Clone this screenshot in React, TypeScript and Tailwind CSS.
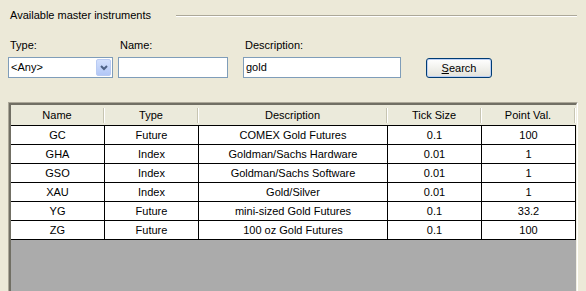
import React from 'react';

const rows = [
  { name: 'GC', type: 'Future', desc: 'COMEX Gold Futures', tick: '0.1', point: '100' },
  { name: 'GHA', type: 'Index', desc: 'Goldman/Sachs Hardware', tick: '0.01', point: '1' },
  { name: 'GSO', type: 'Index', desc: 'Goldman/Sachs Software', tick: '0.01', point: '1' },
  { name: 'XAU', type: 'Index', desc: 'Gold/Silver', tick: '0.01', point: '1' },
  { name: 'YG', type: 'Future', desc: 'mini-sized Gold Futures', tick: '0.1', point: '33.2' },
  { name: 'ZG', type: 'Future', desc: '100 oz Gold Futures', tick: '0.1', point: '100' },
];

// column widths include the 1px right grid line
const cols = [
  { title: 'Name', w: 'w-[94px]' },
  { title: 'Type', w: 'w-[94px]' },
  { title: 'Description', w: 'w-[189px]' },
  { title: 'Tick Size', w: 'w-[94px]' },
  { title: 'Point Val.', w: 'w-[94px]' },
];

const App: React.FC = () => {
  return (
    <div
      className="w-[586px] h-[291px] overflow-hidden bg-[#ECE9D8] text-[11px] text-black flex flex-col"
      style={{ fontFamily: '"Liberation Sans", Arial, sans-serif' }}
    >
      {/* Group title with etched line */}
      <div className="flex items-start pt-[8px] pl-[10px] pr-[9px] h-[22px]">
        <span className="w-[166px] leading-[14px] shrink-0">Available master instruments</span>
        <div className="flex-1 mt-[7px] border-t border-t-[#ACA899] border-b border-b-white" />
      </div>

      {/* Search fields */}
      <div className="flex items-end pl-[8px] mt-[16px]">
        <div className="flex flex-col w-[105px]">
          <span className="pl-[2px] leading-[14px]">Type:</span>
          <div className="mt-[5px] h-[21px] border border-[#7F9DB9] bg-white flex p-[1px]">
            <span className="flex-1 pl-[1px] leading-[17px]">&lt;Any&gt;</span>
            <div className="w-[15px] rounded-[2px] bg-gradient-to-b from-[#D3E0FD] to-[#B2C7F6] border border-[#B9CBF3] flex items-center justify-center">
              <svg width="8" height="6" viewBox="0 0 8 6">
                <polyline points="1,1 4,4 7,1" fill="none" stroke="#4D6185" strokeWidth="2" />
              </svg>
            </div>
          </div>
        </div>
        <div className="flex flex-col w-[110px] ml-[5px]">
          <span className="pl-[2px] leading-[14px]">Name:</span>
          <div className="mt-[5px] h-[21px] border border-[#7F9DB9] bg-white" />
        </div>
        <div className="flex flex-col w-[158px] ml-[15px]">
          <span className="pl-[2px] leading-[14px]">Description:</span>
          <div className="mt-[5px] h-[21px] border border-[#7F9DB9] bg-white pl-[2px] leading-[19px]">gold</div>
        </div>
        <button
          type="button"
          className="ml-[25px] w-[66px] h-[20px] rounded-[3px] border border-[#003C74] bg-gradient-to-b from-white to-[#E3E3DB] shadow-[inset_0_0_0_1px_#BCD0F4] leading-[18px] text-center"
        >
          <span className="underline">S</span>earch
        </button>
      </div>

      {/* Data grid */}
      <div className="ml-[8px] mt-[24px] w-[570px] h-[200px] shrink-0 border-t border-l border-[#ACA899] border-r border-r-white">
        <div className="h-full border-t-2 border-l-2 border-[#716F64] border-r border-r-[#F1EFE2] bg-[#ABABAB] flex flex-col">
          <div className="flex h-[20px] bg-[#EBEADB]">
            {cols.map((c) => (
              <div key={c.title} className={`${c.w} flex items-center`}>
                <span className="flex-1 text-center leading-[20px]">{c.title}</span>
                <div className="w-[2px] h-[15px] border-l border-l-[#C7C5B2] border-r border-r-white" />
              </div>
            ))}
          </div>
          <div className="border-t border-black">
            {rows.map((r) => (
              <div key={r.name} className="flex h-[19px] border-b border-black bg-white">
                {[r.name, r.type, r.desc, r.tick, r.point].map((v, i) => (
                  <div key={i} className={`${cols[i].w} border-r border-black text-center leading-[18px]`}>
                    {v}
                  </div>
                ))}
              </div>
            ))}
          </div>
        </div>
      </div>
    </div>
  );
};

export default App;
